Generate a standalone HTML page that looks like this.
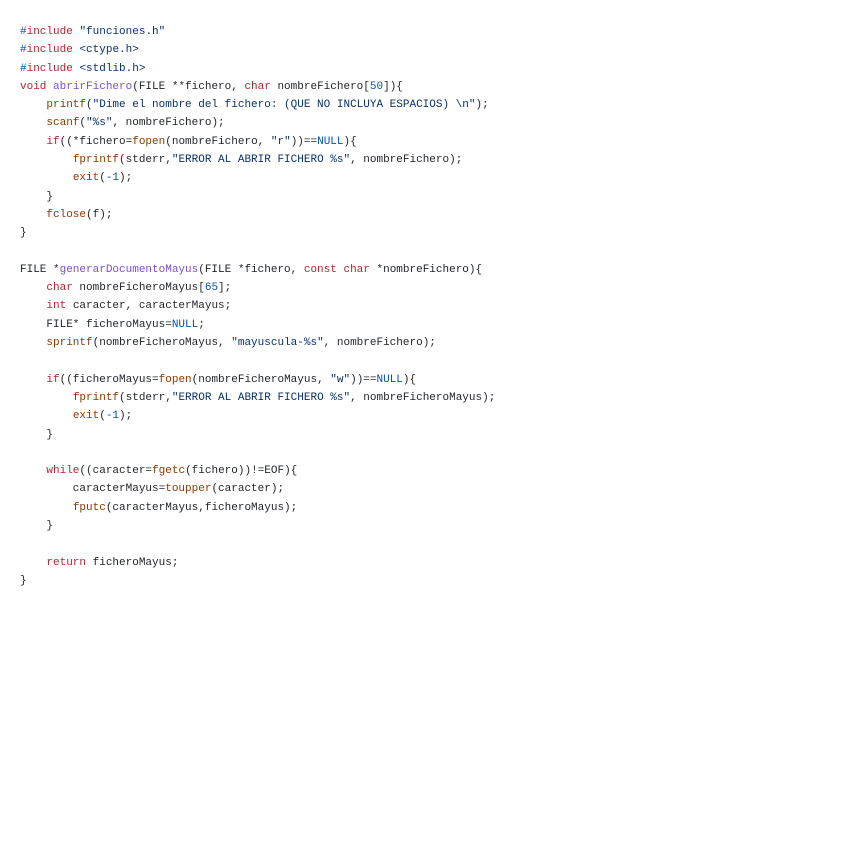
<!DOCTYPE html>
<html>
<head>
<meta charset="utf-8">
<style>
html,body{margin:0;padding:0;width:848px;height:848px;background:#fff;overflow:hidden}
pre{position:absolute;left:20px;top:23px;margin:0;font-family:"Liberation Mono",monospace;font-size:11px;line-height:18.3px;color:#1f2328;white-space:pre;filter:blur(0.3px)}
.k{color:#b92233}.b{color:#0550ae}.s{color:#0a3069}.f{color:#7c4fd0}.o{color:#8f3600}
</style>
</head>
<body>
<pre><span class="b">#</span><span class="k">include</span> <span class="s">"funciones.h"</span>
<span class="b">#</span><span class="k">include</span> <span class="s">&lt;ctype.h&gt;</span>
<span class="b">#</span><span class="k">include</span> <span class="s">&lt;stdlib.h&gt;</span>
<span class="k">void</span> <span class="f">abrirFichero</span>(FILE **fichero, <span class="k">char</span> nombreFichero[<span class="b">50</span>]){
    <span class="o">printf</span>(<span class="s">"Dime el nombre del fichero: (QUE NO INCLUYA ESPACIOS) \n"</span>);
    <span class="o">scanf</span>(<span class="s">"%s"</span>, nombreFichero);
    <span class="k">if</span>((*fichero=<span class="o">fopen</span>(nombreFichero, <span class="s">"r"</span>))==<span class="b">NULL</span>){
        <span class="o">fprintf</span>(stderr,<span class="s">"ERROR AL ABRIR FICHERO %s"</span>, nombreFichero);
        <span class="o">exit</span>(<span class="b">-1</span>);
    }
    <span class="o">fclose</span>(f);
}

FILE *<span class="f">generarDocumentoMayus</span>(FILE *fichero, <span class="k">const</span> <span class="k">char</span> *nombreFichero){
    <span class="k">char</span> nombreFicheroMayus[<span class="b">65</span>];
    <span class="k">int</span> caracter, caracterMayus;
    FILE* ficheroMayus=<span class="b">NULL</span>;
    <span class="o">sprintf</span>(nombreFicheroMayus, <span class="s">"mayuscula-%s"</span>, nombreFichero);

    <span class="k">if</span>((ficheroMayus=<span class="o">fopen</span>(nombreFicheroMayus, <span class="s">"w"</span>))==<span class="b">NULL</span>){
        <span class="o">fprintf</span>(stderr,<span class="s">"ERROR AL ABRIR FICHERO %s"</span>, nombreFicheroMayus);
        <span class="o">exit</span>(<span class="b">-1</span>);
    }

    <span class="k">while</span>((caracter=<span class="o">fgetc</span>(fichero))!=EOF){
        caracterMayus=<span class="o">toupper</span>(caracter);
        <span class="o">fputc</span>(caracterMayus,ficheroMayus);
    }

    <span class="k">return</span> ficheroMayus;
}</pre>
</body>
</html>
